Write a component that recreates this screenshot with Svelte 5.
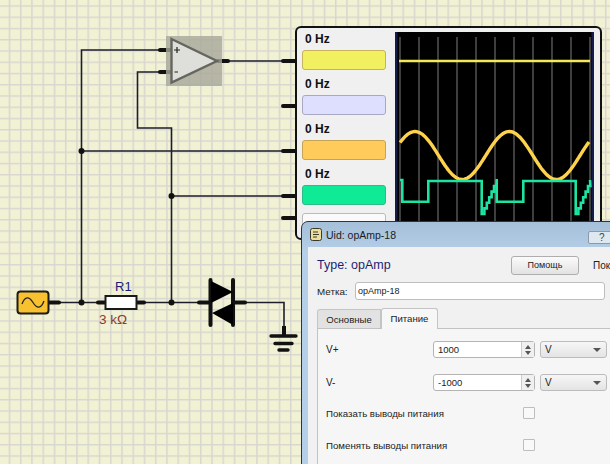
<script>
  const channels = [
    { hz: '0 Hz', cls: 'yellow' },
    { hz: '0 Hz', cls: 'lilac' },
    { hz: '0 Hz', cls: 'orange' },
    { hz: '0 Hz', cls: 'green' }
  ];
  const gridLines = Array.from({ length: 11 }, (_, i) => 400 + i * 19);
  const sine = [];
  for (let x = 400; x <= 590; x += 1.5) {
    const y = 155.5 - 24 * Math.cos((2 * Math.PI * (x - 415)) / 94.3);
    sine.push(`${x},${y.toFixed(1)}`);
  }
  const stairs = (x0, n) => {
    const pts = [];
    for (let i = 0; i < n; i++) {
      const x = x0 + i * 2.4;
      const y = 214 - i * 5.6;
      pts.push(`${x.toFixed(1)},${y.toFixed(1)} ${(x + 2.4).toFixed(1)},${y.toFixed(1)}`);
    }
    return pts.join(' ');
  };
  const green = `400,180 402.3,180 402.3,201.7 428.3,201.7 428.3,181 481.7,181 481.7,214 ${stairs(482, 6)} 496.7,179 496.7,201.7 523.3,201.7 523.3,181 575.7,181 575.7,214 ${stairs(576, 6)} 590,180`;
</script>

<main class="desk">
  <svg class="circuit" width="610" height="464" viewBox="0 0 610 464">
    <defs>
      <pattern id="grid" x="8.7" y="5.3" width="11.25" height="11.25" patternUnits="userSpaceOnUse">
        <path d="M0 0H11.25M0 0V11.25" stroke="#d9d6cf" stroke-width="3" fill="none" />
      </pattern>
    </defs>
    <rect width="610" height="464" fill="#f1f1d4" />
    <rect width="610" height="464" fill="url(#grid)" />

    <g fill="none" stroke="#1d1d2b" stroke-width="1.6">
      <path d="M160 50H81.5V302.5" />
      <path d="M81.5 151H284" />
      <path d="M160 72H137.5V128H171.5V302.5" />
      <path d="M171.5 196H284" />
      <path d="M228 61H284" />
      <path d="M48 302.5H198" />
      <path d="M234 302.5H284V330" />
    </g>
    <g fill="#111">
      <circle cx="81.5" cy="151" r="3" />
      <circle cx="171.5" cy="196" r="3" />
      <circle cx="81.5" cy="302.5" r="3" />
      <circle cx="171.5" cy="302.5" r="3" />
    </g>

    <g stroke="#111" stroke-width="4" stroke-linecap="round" fill="none">
      <path d="M160 50H171M160 72H171M218 61H228" />
      <path d="M283 61H295M283 106H295M283 151H295M283 196H295M283 218H295" />
      <path d="M49 302.5H59M98 302.5H105M137 302.5H144M199 302.5H210M234 302.5H245" />
    </g>

    <rect x="166" y="36" width="56" height="50" fill="#a8a89a" fill-opacity="0.8" />
    <path d="M171.5 39L217 61L171.5 82.5Z" fill="#dedeDa" stroke="#666660" stroke-width="2.4" />
    <path d="M174 50H180M177 47V53M174.5 72H178" stroke="#222" stroke-width="1.2" />

    <rect x="17.5" y="291.5" width="31" height="22" rx="3" fill="#f7c12f" stroke="#1c1c1c" stroke-width="2" />
    <path d="M22 304C25 296 29 296 33 302.5C37 309 41 309 44 301" fill="none" stroke="#222" stroke-width="1.3" />

    <rect x="105.5" y="296" width="31" height="13" fill="#fff" stroke="#1a1a1a" stroke-width="2" />
    <text x="115" y="291" class="ref">R1</text>
    <text x="99" y="324" class="val">3 kΩ</text>

    <path d="M210.5 280V325M233 280V325" stroke="#111" stroke-width="4" stroke-linecap="round" />
    <path d="M211 281L233 292L211 303ZM212 313L233 303V325Z" fill="#000" />

    <path d="M284 326V336" stroke="#111" stroke-width="4" />
    <path d="M271 336H296M275 343.5H292M279 350H288" stroke="#111" stroke-width="3.4" stroke-linecap="round" />
  </svg>

  <section class="scope">
    <div class="channels">
      {#each channels as c}
        <div class="channel">
          <span class="hz">{c.hz}</span>
          <span class="swatch {c.cls}"></span>
        </div>
      {/each}
      <span class="swatch white"></span>
    </div>
    <svg class="screen" width="199" height="210" viewBox="395 32 199 210">
      <rect x="395" y="32" width="199" height="210" fill="#000" />
      <path d="M396 32V242M593 32V242" stroke="#141c4a" stroke-width="3" />
      {#each gridLines as x}
        <path d="M{x} 37V242" stroke="#5a5a5a" stroke-width="1.4" />
      {/each}
      <path d="M399 61H590" stroke="#f2e85a" stroke-width="2.4" />
      <polyline points={sine.join(' ')} fill="none" stroke="#ffd24d" stroke-width="3.4" />
      <polyline points={green} fill="none" stroke="#1fe3a2" stroke-width="2.6" />
    </svg>
  </section>

  <section class="dialog">
    <header class="titlebar">
      <svg class="appicon" width="12" height="13" viewBox="0 0 12 13">
        <rect x="0.5" y="0.5" width="11" height="12" rx="2" fill="#ecdf9c" stroke="#3a3a2a" />
        <path d="M3 4H8M3 6.5H9M3 9H7" stroke="#3a3a2a" />
      </svg>
      <span class="title">Uid: opAmp-18</span>
      <span class="helpbtn">?</span>
    </header>
    <div class="body">
      <div class="typerow">
        <h1>Type: opAmp</h1>
        <button class="push">Помощь</button>
        <span class="more">Пок</span>
      </div>
      <div class="labelrow">
        <span>Метка:</span>
        <div class="textinput">opAmp-18</div>
      </div>
      <div class="tabs">
        <span class="tab">Основные</span>
        <span class="tab active">Питание</span>
      </div>
      <div class="panel">
        <div class="fieldrow">
          <span class="fieldname">V+</span>
          <div class="spin"><span>1000</span><i class="arrows"><b class="up"></b><b class="down"></b></i></div>
          <div class="select"><span>V</span><b class="down big"></b></div>
        </div>
        <div class="fieldrow">
          <span class="fieldname">V-</span>
          <div class="spin"><span>-1000</span><i class="arrows"><b class="up"></b><b class="down"></b></i></div>
          <div class="select"><span>V</span><b class="down big"></b></div>
        </div>
        <div class="checkrow first">
          <span>Показать выводы питания</span>
          <i class="check"></i>
        </div>
        <div class="checkrow">
          <span>Поменять выводы питания</span>
          <i class="check"></i>
        </div>
      </div>
    </div>
  </section>
</main>

<style>
  :global(body) {
    margin: 0;
    overflow: hidden;
  }
  .desk {
    position: relative;
    width: 610px;
    height: 464px;
    overflow: hidden;
    font-family: "Liberation Sans", sans-serif;
  }
  .circuit {
    position: absolute;
    left: 0;
    top: 0;
    display: block;
  }
  .ref {
    font-size: 13px;
    fill: #1c1c7c;
    font-family: "Liberation Sans", sans-serif;
  }
  .val {
    font-size: 13.5px;
    fill: #8a3b30;
    font-family: "Liberation Sans", sans-serif;
  }

  .scope {
    position: absolute;
    left: 295px;
    top: 26px;
    width: 303px;
    height: 210px;
    background: #f0f0f0;
    border: 2px solid #111;
    border-radius: 6px;
    display: flex;
    overflow: hidden;
  }
  .channels {
    width: 98px;
    height: 250px;
    flex: none;
    padding-left: 5px;
    box-sizing: border-box;
    display: flex;
    flex-direction: column;
  }
  .channel {
    height: 45px;
    flex: none;
    display: flex;
    flex-direction: column;
  }
  .hz {
    height: 22px;
    flex: none;
    padding-left: 3px;
    font: bold 12px/23px "Liberation Sans", sans-serif;
    color: #111;
  }
  .swatch {
    display: block;
    width: 84px;
    height: 20px;
    box-sizing: border-box;
    border-radius: 3px;
    border: 1px solid;
    flex: none;
  }
  .yellow { background: #f0f060; border-color: #c4b25c; }
  .lilac { background: #dedeff; border-color: #a8a8c4; }
  .orange { background: #ffcc5c; border-color: #c4a354; }
  .green { background: #0eea96; border-color: #2cbc88; }
  .white { background: #fafafa; border-color: #bbb; margin-top: 5px; height: 30px; }
  .screen {
    display: block;
    flex: none;
    margin-top: 4px;
  }

  .dialog {
    position: absolute;
    left: 301px;
    top: 221px;
    width: 330px;
    height: 260px;
    box-sizing: border-box;
    border: 1px solid #2a3542;
    border-radius: 7px 7px 0 0;
    background: linear-gradient(#a6bfd8, #b5cfe8 30px);
    padding: 0 6px;
    color: #222;
    font-size: 9.7px;
  }
  .titlebar {
    height: 25px;
    display: flex;
    align-items: center;
    gap: 4px;
    position: relative;
    padding-left: 2px;
  }
  .appicon { display: block; }
  .title {
    font-size: 10.5px;
    color: #1b1b1b;
  }
  .helpbtn {
    position: absolute;
    left: 280px;
    top: 9px;
    width: 34px;
    height: 13px;
    background: #dfe7ef;
    border: 1px solid #8a9aaa;
    border-radius: 2px;
    padding-left: 10px;
    box-sizing: border-box;
    font-size: 10px;
    line-height: 12px;
    color: #444;
  }
  .body {
    background: #f1f1f1;
    height: 240px;
    padding-left: 9px;
    box-sizing: border-box;
  }
  .typerow {
    height: 35px;
    padding-top: 1px;
    box-sizing: border-box;
    display: flex;
    align-items: center;
    white-space: nowrap;
  }
  h1 {
    margin: 0;
    width: 194px;
    font-size: 12.5px;
    font-weight: 400;
    color: #1e1e70;
  }
  .push {
    width: 68px;
    height: 19px;
    padding: 0;
    background: linear-gradient(#fbfbfb, #e2e2e2);
    border: 1px solid #aeaeae;
    border-radius: 3px;
    font: 9px "Liberation Sans", sans-serif;
    color: #222;
  }
  .more {
    margin-left: 14px;
    font-size: 10px;
  }
  .labelrow {
    height: 18px;
    display: flex;
    align-items: center;
  }
  .labelrow > span {
    width: 38px;
    font-size: 9.8px;
  }
  .textinput {
    width: 250px;
    height: 18px;
    box-sizing: border-box;
    border: 1px solid #bdbdbd;
    border-radius: 3px;
    background: #fff;
    padding-left: 2px;
    line-height: 16px;
    font-size: 9px;
    flex: none;
  }
  .tabs {
    margin-top: 7px;
    height: 21px;
    display: flex;
    align-items: flex-end;
  }
  .tab {
    width: 64px;
    height: 19px;
    box-sizing: border-box;
    background: #e2e2e2;
    border: 1px solid #c4c4c4;
    border-bottom: 0;
    border-radius: 3px 0 0 0;
    text-align: center;
    line-height: 19px;
    font-size: 9.6px;
  }
  .tab.active {
    width: 57px;
    height: 21px;
    background: #f7f7f7;
    border-radius: 3px 3px 0 0;
    line-height: 20px;
    position: relative;
    top: 1px;
  }
  .panel {
    width: 320px;
    height: 160px;
    box-sizing: border-box;
    border: 1px solid #c2c2c2;
    background: #f6f6f6;
    padding: 12px 0 0 8px;
  }
  .fieldrow {
    height: 17px;
    margin-bottom: 16px;
    display: flex;
    align-items: center;
  }
  .fieldname {
    width: 107px;
    font-size: 10px;
  }
  .spin {
    width: 102px;
    height: 17px;
    box-sizing: border-box;
    border: 1px solid #b4b4b4;
    border-radius: 3px;
    background: #fff;
    display: flex;
    align-items: center;
    justify-content: space-between;
    padding-left: 4px;
    font-size: 9.5px;
  }
  .arrows {
    width: 12px;
    height: 15px;
    border-left: 1px solid #ccc;
    background: #f0f0f0;
    display: flex;
    flex-direction: column;
    align-items: center;
    justify-content: center;
    gap: 2px;
  }
  .up, .down {
    display: block;
    width: 0;
    height: 0;
    border-left: 3px solid transparent;
    border-right: 3px solid transparent;
  }
  .up { border-bottom: 4px solid #555; }
  .down { border-top: 4px solid #555; }
  .down.big {
    border-left-width: 4px;
    border-right-width: 4px;
    border-top-width: 4px;
  }
  .select {
    margin-left: 5px;
    width: 67px;
    height: 17px;
    box-sizing: border-box;
    border: 1px solid #bcbcbc;
    border-radius: 3px;
    background: linear-gradient(#f6f6f6, #e4e4e4);
    display: flex;
    align-items: center;
    justify-content: space-between;
    padding: 0 5px 0 4px;
    font-size: 10px;
    flex: none;
  }
  .checkrow {
    height: 12px;
    margin-bottom: 20px;
    display: flex;
    align-items: center;
  }
  .checkrow.first {
    margin-top: 1px;
  }
  .checkrow > span {
    width: 197px;
    font-size: 9.7px;
    white-space: nowrap;
  }
  .check {
    display: block;
    width: 12px;
    height: 12px;
    box-sizing: border-box;
    border: 1px solid #bdbdbd;
    background: #f9f9f9;
    border-radius: 1px;
  }
</style>
